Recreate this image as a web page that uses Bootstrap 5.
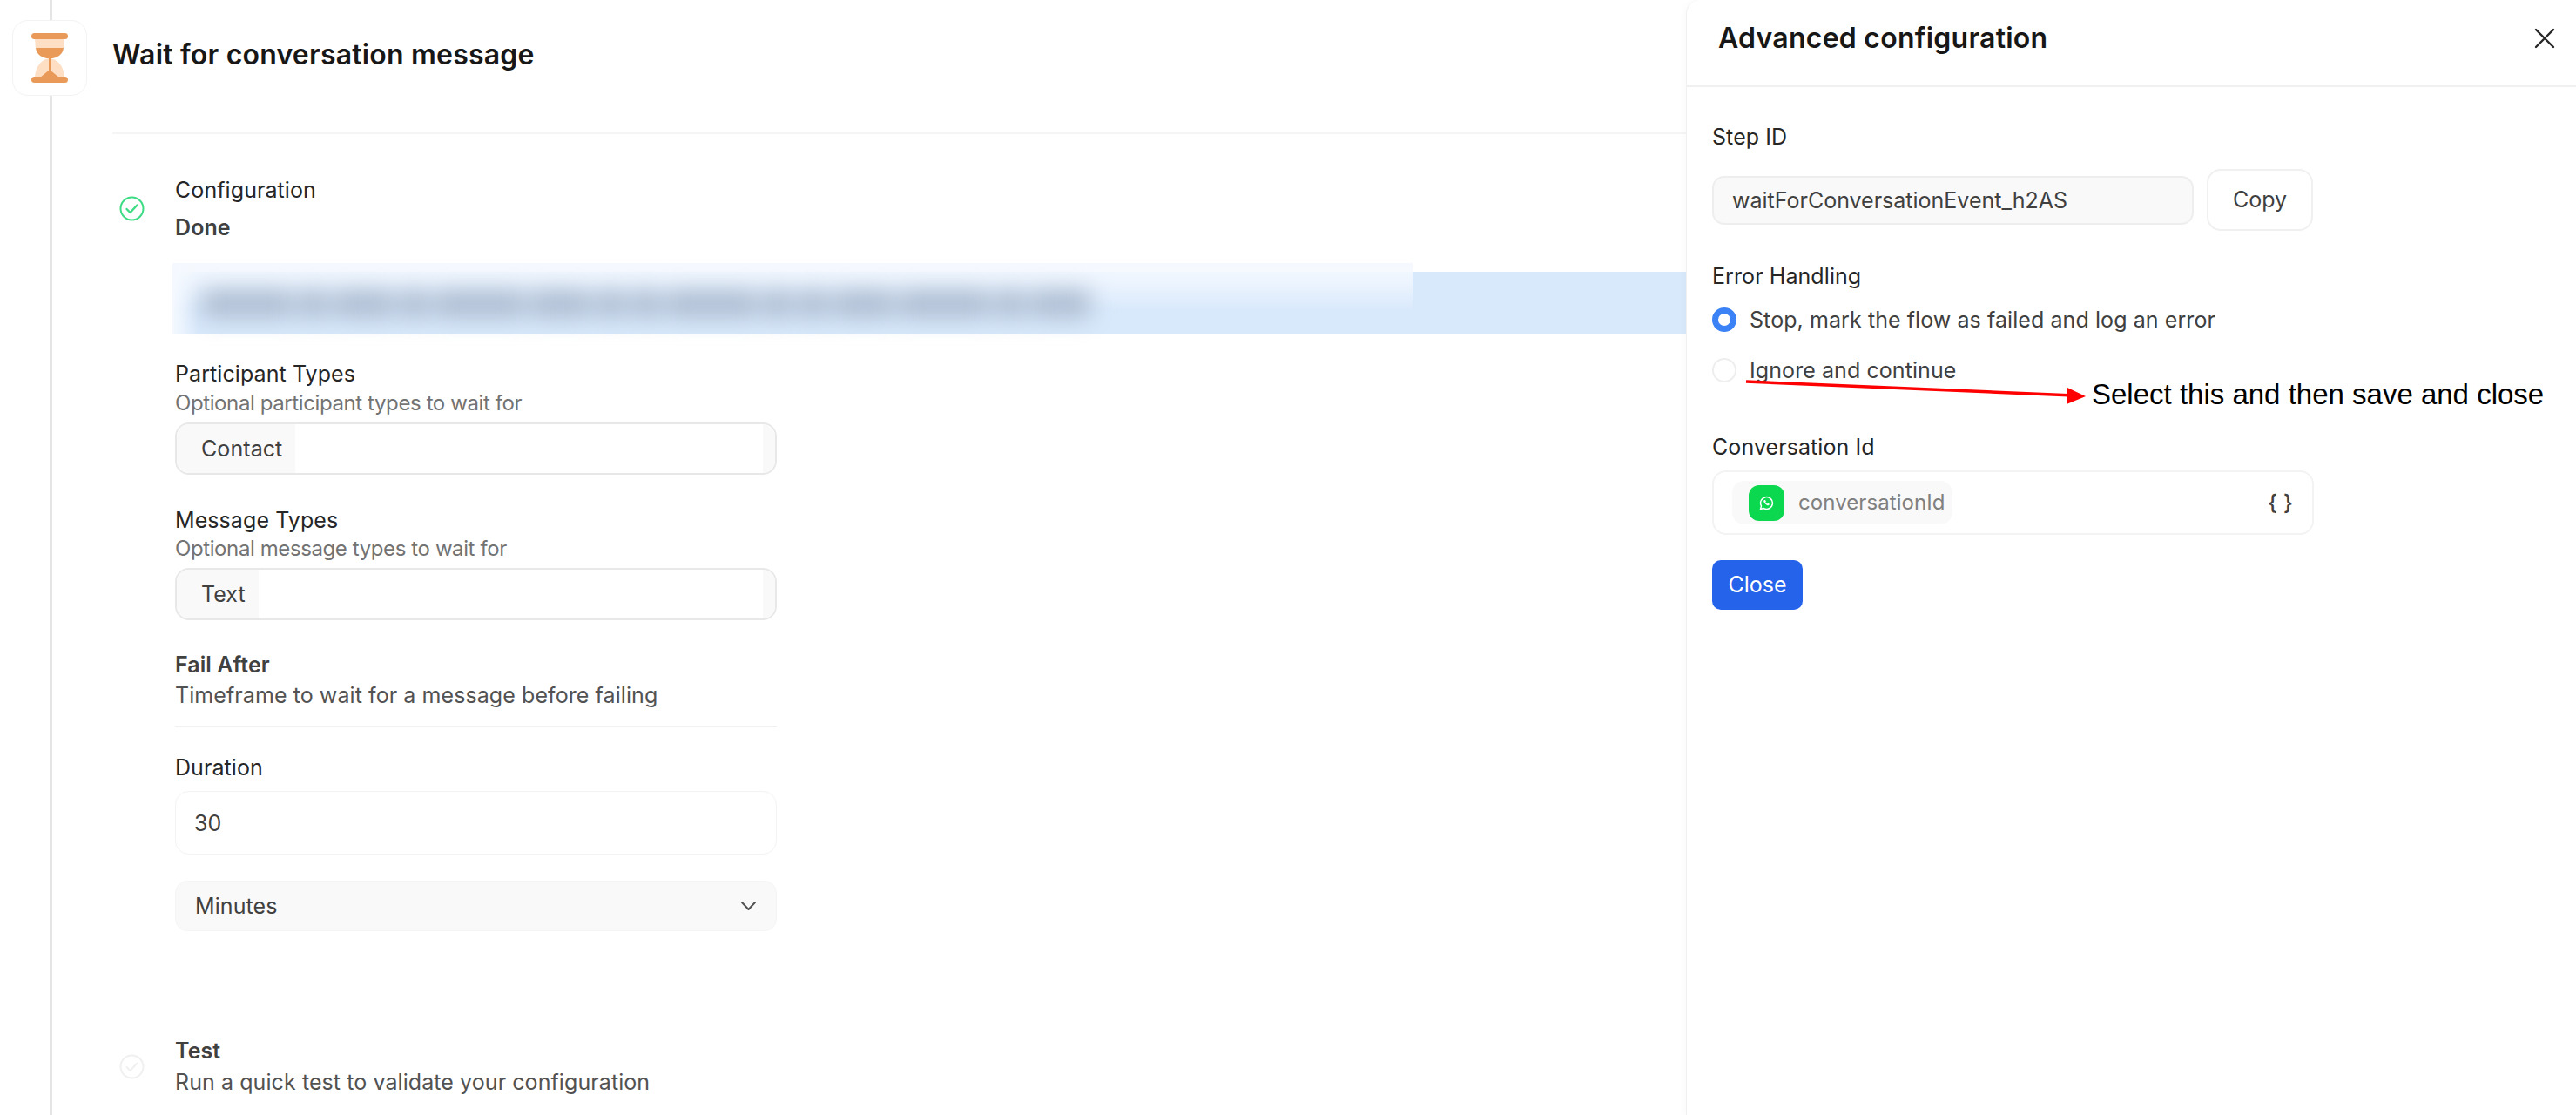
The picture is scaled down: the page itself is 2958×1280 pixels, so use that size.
<!DOCTYPE html>
<html lang="en">
<head>
<meta charset="utf-8">
<title>Wait for conversation message</title>
<link href="https://cdn.jsdelivr.net/npm/bootstrap@5.3.0/dist/css/bootstrap.min.css" rel="stylesheet">
<style>
html,body{height:1280px;overflow:hidden;background:#fff}
body{font-family:Inter,"Liberation Sans",sans-serif;font-size:25px;line-height:34px;color:#262626;letter-spacing:.08px}
.flow-col{position:relative;width:1936px;height:1280px;flex:none}
.flow-col::before{content:"";position:absolute;left:57px;top:0;bottom:0;width:3px;background:#e5e5e5}
.head-row{position:relative;padding:23px 0 0 14px;height:152px;gap:29px}
.icon-tile{width:86px;height:87px;background:#fff;border:1px solid #f3f3f3;border-radius:18px}
.flow-title{font-size:32px;font-weight:600;line-height:40px;color:#171717;margin:20px 0 0;letter-spacing:.2px}
.flow-body{margin-left:129px;border-top:2px solid #f5f5f5;padding-top:47px}
.step-row{gap:35px;padding-left:8px}
.step-strong{font-weight:600;color:#404040}
.done-gap{margin-top:9px}
.plain-note{color:#525252}
.band-wrap{position:relative;height:82px;margin:24px 0 0 69px;padding-top:10px}
.band-blue{height:72px;background:#d9e9fc}
.band-fade{position:absolute;left:0;top:0;width:1424px;height:54px;background:linear-gradient(#f5f9ff,rgba(245,249,255,.7) 40%,rgba(217,233,252,0))}
.band-edge{position:absolute;left:0;top:0;width:30px;height:82px;background:linear-gradient(90deg,#f5f9ff,rgba(217,233,252,0))}
.band-blur{position:absolute;left:34px;top:31px;width:1020px;height:32px;gap:6px;filter:blur(13px)}
.band-blur i{display:block;height:100%;background:#aebdd1;flex:1 1 auto}
.band-blur i:nth-child(3n){flex-grow:2}
.band-blur i:nth-child(4n+1){flex-grow:3}
.field-col{margin-left:72px;width:691px}
.field-label{color:#262626}
.hint-text{font-size:24px;line-height:30px;color:#737373;letter-spacing:-.4px}
.hint-one{margin-top:2px}.hint-two{margin-top:1px}
.tag-input{height:60px;margin-top:7px;border:2px solid #e8e8e8;border-radius:16px;overflow:hidden;background:#fff;color:#404040}
.tag-chip{background:#f9f9f9;padding:0 15px 0 28px;line-height:56px}
.tag-end{width:14px;background:#f9f9f9}
.plain-input.form-control{font-size:25px;color:#404040;background:#fff;border:1px solid #f3f3f3;border-radius:16px;height:73px;padding:0 21px}
.plain-select{height:58px;background:#f9f9f9;border:1px solid #f5f5f5;border-radius:14px;padding:0 22px;color:#404040}
.mute-sep{border-top:1px solid #f0f0f0;opacity:1;margin:19px 0 29px}
.side-panel{position:relative;width:1022px;height:1280px;flex:none;background:#fff;border-left:1px solid #f0f0f0;border-top-left-radius:16px;box-shadow:-3px 0 6px rgba(0,0,0,.02)}
.panel-head{height:100px;border-bottom:2px solid #f0f0f0;padding:0 24px 10px 36px}
.panel-title{font-size:32px;font-weight:600;line-height:40px;color:#171717;margin:0;letter-spacing:.25px}
.panel-x{background:none;border:0;padding:0;line-height:0}
.panel-body{padding:40px 0 0 29px;width:720px}
.id-input.form-control{width:553px;height:56px;font-size:25px;color:#404040;background:#f9f9f9;border:2px solid #eee;border-radius:14px;padding:0 21px}
.copy-btn.btn{width:122px;height:71px;font-size:25px;color:#404040;background:#fff;border:2px solid #f0f0f0;border-radius:16px;padding:0}
.opt-row{gap:15px;color:#404040}
.opt-row .form-check-input{width:28px;height:28px;margin:0;flex:none;border:2px solid #eee;background-color:#fff}
.opt-row .form-check-input:checked{background-color:#fff;border:7px solid #3b82f6;background-image:none}
.var-box{height:74px;margin-top:10px;border:2px solid #f3f3f3;border-radius:16px;padding:0 22px 0 21px}
.var-chip{width:253px;height:50px;background:#f9f9f9;border-radius:14px;padding-left:19px;gap:16px;color:#808080;font-size:24px}
.wa-tile{width:41px;height:41px;background:#0bd84f;border-radius:12px;flex:none}
.brace-txt{font-size:25px;font-weight:500;color:#404040}
.close-btn.btn{display:block;width:104px;height:57px;margin-top:29px;background:#2563eb;border:0;border-radius:10px;color:#fff;font-size:25px;padding:0}
.note-arrow{position:absolute;left:60px;top:425px;width:410px;height:45px}
.note-text{position:absolute;left:465px;top:435px;font-family:"Liberation Sans",Arial,sans-serif;font-size:33px;line-height:36px;color:#000;white-space:nowrap;letter-spacing:0}
.msg-gap{margin-top:35px}.fail-gap{margin-top:34px}.run-gap{margin-top:2px}.dur-gap{margin-top:10px}.sel-gap{margin-top:30px}.test-gap{margin-top:120px}
.id-row{gap:15px;margin-top:20px}.err-gap{margin-top:35px}.opt-one{margin-top:16px}.opt-two{margin-top:24px}.conv-gap{margin-top:54px}
</style>
</head>
<body>
<div class="d-flex">
  <div class="flow-col">
    <div class="head-row d-flex align-items-start">
      <div class="icon-tile d-flex align-items-center justify-content-center">
        <svg width="42" height="57" viewBox="0 0 42 57" aria-hidden="true">
          <path d="M4 6h34l-.8 11H4.800z" fill="#fedfc4"/>
          <path d="M5 17h32c-.8 7-6 11-13 12H18C11 28 5.800 24 5 17z" fill="#e99a58"/>
          <path d="M20 29c-8 1-15 9-16 21h34c-1-12-8-20-16-21z" fill="#fedfc4"/>
          <rect x="20" y="28" width="2" height="15" fill="#e99a58"/>
          <path d="M21 42l11 9H10z" fill="#e99a58"/>
          <rect x="0" y="0" width="42" height="7" rx="3.500" fill="#e99a58"/>
          <rect x="0" y="50" width="42" height="7" rx="3.500" fill="#e99a58"/>
        </svg>
      </div>
      <h1 class="flow-title">Wait for conversation message</h1>
    </div>
    <div class="flow-body">
      <div class="step-row d-flex align-items-center">
        <svg width="29" height="29" viewBox="0 0 29 29" fill="none" stroke="#3ddc84" stroke-width="2" aria-hidden="true"><circle cx="14.500" cy="14.500" r="13"/><path d="M8.500 15l4 4 8-8.500" stroke-width="2.400" stroke-linecap="round" stroke-linejoin="round"/></svg>
        <div>
          <div class="field-label">Configuration</div>
          <div class="step-strong done-gap">Done</div>
        </div>
      </div>
      <div class="band-wrap">
        <div class="band-blue"></div>
        <div class="band-fade"></div>
        <div class="band-edge"></div>
        <div class="band-blur d-flex">
          <i></i><i></i><i></i><i></i><i></i><i></i><i></i><i></i><i></i><i></i><i></i><i></i><i></i><i></i><i></i>
        </div>
      </div>
      <div class="field-col">
        <div class="field-label mt-4 pt-1">Participant Types</div>
        <div class="hint-text hint-one">Optional participant types to wait for</div>
        <div class="tag-input d-flex">
          <span class="tag-chip">Contact</span><span class="flex-grow-1"></span><span class="tag-end"></span>
        </div>
        <div class="field-label msg-gap">Message Types</div>
        <div class="hint-text hint-two">Optional message types to wait for</div>
        <div class="tag-input d-flex">
          <span class="tag-chip">Text</span><span class="flex-grow-1"></span><span class="tag-end"></span>
        </div>
        <div class="step-strong fail-gap">Fail After</div>
        <div class="plain-note hint-two">Timeframe to wait for a message before failing</div>
        <hr class="mute-sep">
        <div class="field-label">Duration</div>
        <input class="plain-input form-control dur-gap" type="text" value="30" aria-label="Duration">
        <div class="plain-select d-flex align-items-center justify-content-between sel-gap">
          <span>Minutes</span>
          <svg width="19" height="12" viewBox="0 0 19 12" fill="none" stroke="#525252" stroke-width="2" stroke-linecap="round" stroke-linejoin="round" aria-hidden="true"><path d="M2 2l7.500 8L17 2"/></svg>
        </div>
      </div>
      <div class="step-row d-flex align-items-center test-gap">
        <svg width="29" height="29" viewBox="0 0 29 29" fill="none" stroke="#f0f0f0" stroke-width="2" aria-hidden="true"><circle cx="14.500" cy="14.500" r="13"/><path d="M8.500 15l4 4 8-8.500" stroke-linecap="round" stroke-linejoin="round"/></svg>
        <div>
          <div class="step-strong">Test</div>
          <div class="plain-note run-gap">Run a quick test to validate your configuration</div>
        </div>
      </div>
    </div>
  </div>
  <aside class="side-panel">
    <div class="panel-head d-flex align-items-center justify-content-between">
      <h2 class="panel-title">Advanced configuration</h2>
      <button class="panel-x" type="button" aria-label="Close">
        <svg width="24" height="24" viewBox="0 0 24 24" fill="none" stroke="#262626" stroke-width="2.400" stroke-linecap="round" aria-hidden="true"><path d="M2 2l20 20M22 2L2 22"/></svg>
      </button>
    </div>
    <div class="panel-body">
      <div class="field-label">Step ID</div>
      <div class="d-flex align-items-center id-row">
        <input class="id-input form-control" type="text" value="waitForConversationEvent_h2AS" aria-label="Step ID">
        <button class="copy-btn btn" type="button">Copy</button>
      </div>
      <div class="field-label err-gap">Error Handling</div>
      <label class="opt-row d-flex align-items-center opt-one"><input class="form-check-input" type="radio" name="errmode" checked><span>Stop, mark the flow as failed and log an error</span></label>
      <label class="opt-row d-flex align-items-center opt-two"><input class="form-check-input" type="radio" name="errmode"><span>Ignore and continue</span></label>
      <div class="field-label conv-gap">Conversation Id</div>
      <div class="var-box d-flex align-items-center justify-content-between">
        <div class="var-chip d-flex align-items-center">
          <span class="wa-tile d-flex align-items-center justify-content-center">
            <svg width="17" height="17" viewBox="0 0 17 17" fill="none" aria-hidden="true"><path d="M1.500 15.500l1-3.600a6.900 6.900 0 1 1 2.600 2.600z" stroke="#fff" stroke-width="1.500" stroke-linejoin="round"/><path d="M6 5c-.8.500-.9 1.500-.4 2.600.7 1.500 2 2.800 3.500 3.400 1.100.5 2 .3 2.500-.5l.2-.9-1.800-.9-.7.800c-.9-.4-1.700-1.200-2.100-2.100l.7-.7L7 4.900z" fill="#fff"/></svg>
          </span>
          <span>conversationId</span>
        </div>
        <span class="brace-txt">{ }</span>
      </div>
      <button class="close-btn btn" type="button">Close</button>
    </div>
    <svg class="note-arrow" viewBox="0 0 410 45" aria-hidden="true"><path d="M8 13L384 29" stroke="#f00" stroke-width="3.500" fill="none"/><path d="M398 30l-22 9 1-19z" fill="#f00"/></svg>
    <div class="note-text">Select this and then save and close</div>
  </aside>
</div>
<script src="https://cdn.jsdelivr.net/npm/bootstrap@5.3.0/dist/js/bootstrap.bundle.min.js"></script>
</body>
</html>
